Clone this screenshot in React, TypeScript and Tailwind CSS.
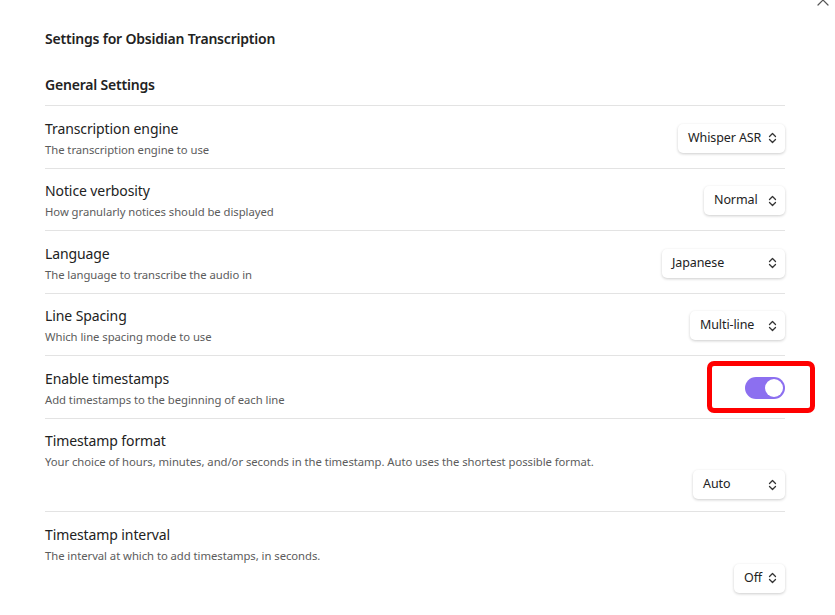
import React from 'react';

const font = { fontFamily: '"Noto Sans", "Open Sans", sans-serif' };

function Chevrons() {
  return (
    <svg width="9" height="12" viewBox="0 0 9 12" fill="none" stroke="#333" strokeWidth="1.3" strokeLinecap="round" strokeLinejoin="round">
      <path d="M1.5 4.5 4.5 1.5 7.5 4.5" />
      <path d="M1.5 7.5 4.5 10.5 7.5 7.5" />
    </svg>
  );
}

function Select({ value, width }: { value: string; width: string }) {
  return (
    <div className={`${width} h-[29px] flex items-center justify-between pl-[10px] pr-[8px] rounded-[5px] bg-white shadow-[0_1px_3px_rgba(0,0,0,0.2)] text-[12.5px] tracking-[-0.1px] text-[#222]`}>
      <span>{value}</span>
      <Chevrons />
    </div>
  );
}

function Toggle() {
  return (
    <div className="w-[40px] h-[22px] rounded-full bg-[#8c6ff0] flex items-center justify-end pr-[2px]">
      <div className="w-[18px] h-[18px] rounded-full bg-white" />
    </div>
  );
}

function Row({ name, desc, children, wrap }: { name: string; desc: string; children: React.ReactNode; wrap?: boolean }) {
  return (
    <div className={`border-t border-[#e3e3e3] flex pt-[12.5px] ${wrap ? 'flex-col items-stretch pb-[12px]' : 'items-center justify-between pb-[10px]'}`}>
      <div>
        <div className="text-[14px] leading-[19px] tracking-[-0.1px] text-[#222]">{name}</div>
        <div className="text-[11.3px] leading-[17px] tracking-[-0.05px] text-[#5c5c5c] mt-[3px]">{desc}</div>
      </div>
      {wrap ? <div className="flex justify-end">{children}</div> : children}
    </div>
  );
}

export default function App() {
  return (
    <div style={font} className="relative w-[835px] h-[615px] bg-white overflow-hidden">
      {/* close button, cut off at the top */}
      <svg className="absolute left-[817px] top-[-6px]" width="12" height="12" viewBox="0 0 12 12" stroke="#555" strokeWidth="1.2" strokeLinecap="round">
        <path d="M1 1 11 11M11 1 1 11" />
      </svg>

      <div className="pl-[45px] pr-[50px] pt-[28px]">
        <h1 className="text-[14px] leading-[22px] font-semibold tracking-[-0.2px] text-[#222]">Settings for Obsidian Transcription</h1>
        <h2 className="mt-[24px] text-[14px] leading-[22px] font-semibold tracking-[-0.2px] text-[#222] pb-[9px]">General Settings</h2>

        <Row name="Transcription engine" desc="The transcription engine to use">
          <Select value="Whisper ASR" width="w-[107px]" />
        </Row>
        <Row name="Notice verbosity" desc="How granularly notices should be displayed">
          <Select value="Normal" width="w-[81px]" />
        </Row>
        <Row name="Language" desc="The language to transcribe the audio in">
          <Select value="Japanese" width="w-[123px]" />
        </Row>
        <Row name="Line Spacing" desc="Which line spacing mode to use">
          <Select value="Multi-line" width="w-[95px]" />
        </Row>
        <Row name="Enable timestamps" desc="Add timestamps to the beginning of each line">
          <div className="relative">
            <Toggle />
            {/* red highlight annotation */}
            <div className="absolute left-[-38px] top-[-16px] w-[108px] h-[52px] border-[5px] border-[#ff0000] rounded-[7px]" />
          </div>
        </Row>
        <Row wrap name="Timestamp format" desc="Your choice of hours, minutes, and/or seconds in the timestamp. Auto uses the shortest possible format.">
          <Select value="Auto" width="w-[92px]" />
        </Row>
        <Row wrap name="Timestamp interval" desc="The interval at which to add timestamps, in seconds.">
          <Select value="Off" width="w-[51px]" />
        </Row>
      </div>
    </div>
  );
}
